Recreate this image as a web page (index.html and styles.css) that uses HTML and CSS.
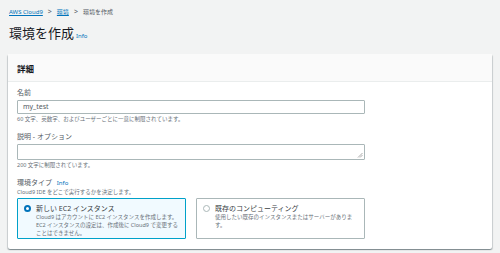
FILE: index.html
```html
<!DOCTYPE html>
<html lang="ja">
<head>
<meta charset="utf-8">
<link rel="stylesheet" href="styles.css">
</head>
<body>
<nav class="crumbs">
  <a class="crumb-link">AWS Cloud9</a>
  <span class="sep">&gt;</span>
  <a class="crumb-link">環境</a>
  <span class="sep">&gt;</span>
  <span class="crumb-current">環境を作成</span>
</nav>
<h1 class="title">環境を作成 <span class="info">Info</span></h1>
<section class="card">
  <div class="card-head">詳細</div>
  <div class="card-body">
    <div class="field">
      <div class="label">名前</div>
      <div class="input">my_test</div>
      <div class="hint">60 文字、英数字、およびユーザーごとに一意に制限されています。</div>
    </div>
    <div class="field">
      <div class="label">説明 - オプション</div>
      <div class="textarea">
        <svg class="grip" width="6" height="6" viewBox="0 0 6 6"><path d="M1 5.5L5.5 1M3 5.5L5.5 3" stroke="#888" stroke-width="0.7"/></svg>
      </div>
      <div class="hint">200 文字に制限されています。</div>
    </div>
    <div class="field">
      <div class="label">環境タイプ <span class="info">Info</span></div>
      <div class="hint hint-top">Cloud9 IDE をどこで実行するかを決定します。</div>
      <div class="tiles">
        <div class="tile tile-on">
          <span class="radio radio-on"></span>
          <div class="tile-text">
            <div class="tile-title">新しい EC2 インスタンス</div>
            <div class="tile-desc">Cloud9 はアカウントに EC2 インスタンスを作成します。EC2 インスタンスの設定は、作成後に Cloud9 で変更することはできません。</div>
          </div>
        </div>
        <div class="tile">
          <span class="radio"></span>
          <div class="tile-text">
            <div class="tile-title">既存のコンピューティング</div>
            <div class="tile-desc">使用したい既存のインスタンスまたはサーバーがあります。</div>
          </div>
        </div>
      </div>
    </div>
  </div>
</section>
</body>
</html>
```
FILE: styles.css
```css
* { box-sizing: border-box; }
html, body { margin: 0; }
body {
  width: 500px;
  height: 253px;
  overflow: hidden;
  background: #f2f3f3;
  font-family: "Noto Sans", "Noto Sans CJK JP", sans-serif;
  color: #16191f;
  padding: 7px 8px 0 8px;
}
.crumbs {
  display: flex;
  align-items: center;
  gap: 5px;
  font-size: 6px;
  height: 9px;
  padding-left: 1px;
}
.crumb-link { color: #0073bb; text-decoration: underline; }
.sep { color: #545b64; font-size: 7px; }
.crumb-current { color: #545b64; }
.title {
  margin: 9px 0 0 1px;
  font-size: 13px;
  font-weight: 400;
  line-height: 16px;
  height: 16px;
  display: flex;
  align-items: baseline;
  gap: 2px;
}
.info { color: #0073bb; font-size: 6px; font-weight: 400; }
.card {
  margin-top: 13px;
  width: 484px;
  background: #fff;
  border-radius: 2px;
  box-shadow: 0 1px 1px rgba(0,28,36,0.3), 1px 1px 1px rgba(0,28,36,0.15), -1px 1px 1px rgba(0,28,36,0.15);
}
.card-head {
  height: 28px;
  background: #fafafa;
  border-bottom: 1px solid #eaeded;
  font-size: 8.5px;
  font-weight: 700;
  display: flex;
  align-items: center;
  padding-left: 9px;
}
.card-body { padding: 6px 9px 10px 9px; }
.field { margin-bottom: 8px; }
.field:last-child { margin-bottom: 0; }
.label { font-size: 7px; line-height: 10px; color: #545b64; }
.label .info { margin-left: 3px; }
.input, .textarea {
  margin-top: 2px;
  width: 348px;
  height: 14px;
  border: 1px solid #aab7b8;
  border-radius: 1px;
  font-size: 7px;
  line-height: 12px;
  padding-left: 5px;
  position: relative;
  color: #545b64;
}
.textarea { height: 16px; }
.grip { position: absolute; right: 1px; bottom: 1px; }
.hint { font-size: 5.5px; line-height: 9px; color: #687078; margin-top: 1px; }
.hint-top { margin-top: 0; }
.tiles { display: flex; gap: 10px; margin-top: 1px; }
.tile {
  width: 169px;
  height: 41px;
  border: 1px solid #aab7b8;
  border-radius: 1px;
  display: flex;
  padding: 5px 6px;
  gap: 5px;
}
.tile-on { border-color: #00a1c9; background: #f1faff; }
.radio {
  flex: none;
  width: 7px;
  height: 7px;
  border-radius: 50%;
  border: 1px solid #aab7b8;
  margin-top: 1px;
  background: #fff;
}
.radio-on { border: 2px solid #0073bb; }
.tile-text { flex: 1; }
.tile-title { font-size: 7px; line-height: 9px; color: #3a3f45; }
.tile-desc { font-size: 5.5px; line-height: 8px; color: #687078; }
```
